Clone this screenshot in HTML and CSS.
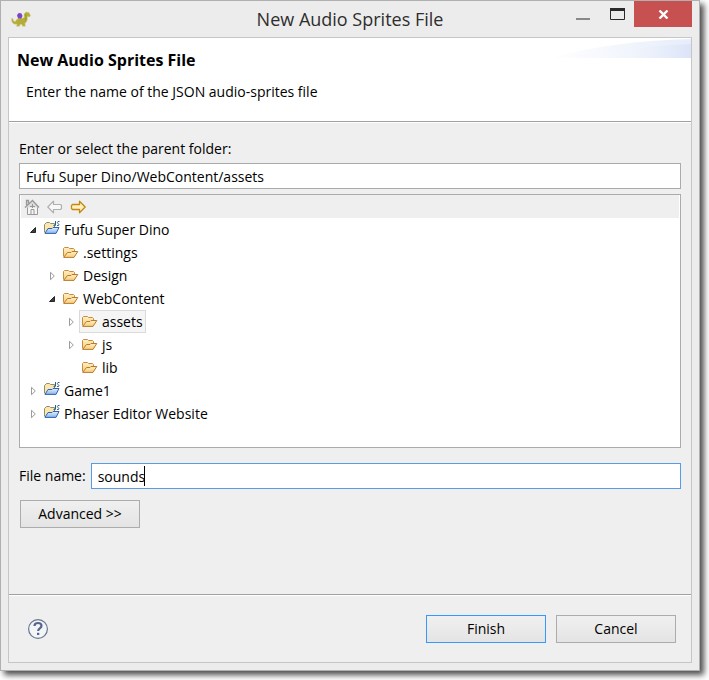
FILE: index.html
```html
<!DOCTYPE html>
<html lang="en">
<head>
<meta charset="utf-8">
<title>New Audio Sprites File</title>
<link rel="stylesheet" href="styles.css">
</head>
<body>
<svg class="defs" aria-hidden="true">
  <defs>
    <linearGradient id="gold" x1="0" y1="0" x2="0" y2="1"><stop offset="0" stop-color="#fff0c4"/><stop offset="1" stop-color="#f7cc78"/></linearGradient>
    <linearGradient id="blue" x1="0" y1="0" x2="0" y2="1"><stop offset="0" stop-color="#e4f0fd"/><stop offset="1" stop-color="#86b4ee"/></linearGradient>
    <symbol id="folder" viewBox="0 0 16 16">
      <path d="M.5 12.500V4.500L1.500 3.500H5.500L6.500 4.500H10.500L11.500 5.500V7" fill="url(#gold)" stroke="#c68d42"/>
      <path d="M.7 13.400L4.500 8.500H8L9 7.500H14.800L11 13.400Z" fill="url(#gold)" stroke="#b87a30" stroke-linejoin="round"/>
    </symbol>
    <symbol id="project" viewBox="0 0 16 16">
      <path d="M.5 12.500V4.500L2.500 2.500H5.500L6.500 3.500H10.500V8" fill="#fbe6b0" stroke="#8e8c69"/>
      <path d="M1 13.400L4 8.500H8L9 7.500H15L12 13.400Z" fill="url(#blue)" stroke="#2f63b5" stroke-linejoin="round"/>
      <path d="M11.500 1V5Q11.500 6.500 9.500 5.500M15.500 1.500H14Q12.800 2.500 14 3.500Q15.800 5 14.500 5.500H13" fill="none" stroke="#2c5f8c"/>
    </symbol>
    <symbol id="closed" viewBox="0 0 8 10"><path d="M2.500 1.300V8.700L6.300 5Z" fill="#fff" stroke="#9b9b9b"/></symbol>
    <symbol id="open" viewBox="0 0 8 10"><path d="M6.500 2.500V7.500H1.500Z" fill="#404040" stroke="#262626"/></symbol>
  </defs>
</svg>
<main class="window">
  <header class="titlebar">
    <svg class="app-icon" viewBox="0 0 20 16" aria-hidden="true">
      <path d="M.6 7.500Q0 13.800 6 13.200L5.500 15.300H8.500L9 13.500H11L11.500 15.300H14.300L14 12.500Q17 10.500 16.300 5.500L18.500 6L19.500 4.500L18 1.600L15.500 1Q12.600 1.400 13.200 6.500Q12 7.500 10 7Q6 7 4.500 10.300Q2.300 11 1.800 7.500Z" fill="#b5ad35" stroke="#d0cc94" stroke-width=".5"/>
      <path d="M13.800 3L15 5.500L14.600 9.500" fill="none" stroke="#8f9a2d"/>
      <path d="M6 4.500L7 2.500L8.500 2L10.500 2.600L11.500 5L10.300 7.500H7.200Z" fill="#7b45c4"/>
    </svg>
    <h1 class="title">New Audio Sprites File</h1>
    <div class="controls">
      <button class="control minimize" aria-label="Minimize"><svg width="14" height="14" viewBox="0 0 14 14"><path d="M0 12H14" stroke="#898989" stroke-width="2"/></svg></button>
      <button class="control maximize" aria-label="Maximize"><svg width="15" height="12" viewBox="0 0 15 12"><path d="M.5 1V11.500H14.500V1" fill="none" stroke="#2a2a2a"/><path d="M0 1.500H15" stroke="#2a2a2a" stroke-width="3"/></svg></button>
      <button class="control close" aria-label="Close"><svg width="11" height="9" viewBox="0 0 11 9"><path d="M1.500 .5L9.500 8.500M9.500 .5L1.500 8.500" stroke="#fff" stroke-width="2.400"/></svg></button>
    </div>
  </header>
  <form class="panel">
    <section class="banner">
      <svg class="banner-art" width="140" height="20" viewBox="0 0 140 20" aria-hidden="true">
        <defs>
          <linearGradient id="fade"><stop offset="0" stop-color="#fff"/><stop offset="1" stop-color="#e6edfa"/></linearGradient>
          <linearGradient id="fade2"><stop offset="0" stop-color="#fff" stop-opacity="0"/><stop offset="1" stop-color="#dbe4f8"/></linearGradient>
        </defs>
        <path d="M0 20Q60 3 140 1V20Z" fill="url(#fade)"/>
        <path d="M40 20Q80 8 140 6V20Z" fill="url(#fade2)"/>
      </svg>
      <h2 class="heading">New Audio Sprites File</h2>
      <p class="description">Enter the name of the JSON audio-sprites file</p>
    </section>
    <section class="content">
      <label class="folder-label" for="folder-path">Enter or select the parent folder:</label>
      <input class="field" id="folder-path" type="text" value="Fufu Super Dino/WebContent/assets">
      <div class="browser">
        <div class="toolbar">
          <button class="tool" type="button" aria-label="Home"><svg width="16" height="16" viewBox="0 0 16 16"><path d="M3.500 7V15.500H13.500V7" fill="#f5f5f5" stroke="#999"/><path d="M1 8.500L8.500 1.500L15 8.500M4.500 5V1.500H2.500V6" fill="#ddd" stroke="#999" stroke-width="1.300"/><path d="M7 15V10.500H10V15M6 7.500H11M8.500 5V9" fill="none" stroke="#999"/></svg></button>
          <button class="tool" type="button" aria-label="Back"><svg width="16" height="16" viewBox="0 0 16 16"><path d="M.8 8L6.500 2.200V5.500H13.500L14.500 6.500V9.500L13.500 10.500H6.500V13.800Z" fill="#f8f8f8" stroke="#b0b0b0" stroke-width="1.200" stroke-linejoin="round"/></svg></button>
          <button class="tool" type="button" aria-label="Forward"><svg width="16" height="16" viewBox="0 0 16 16"><path d="M15.200 8L9.500 2.200V5.500H2.500L1.500 6.500V9.500L2.500 10.500H9.500V13.800Z" fill="#fff1bb" stroke="#c38816" stroke-width="1.300" stroke-linejoin="round"/></svg></button>
        </div>
        <ul class="tree" role="tree" aria-label="Folders">
          <li role="treeitem" aria-expanded="true"><div class="row"><svg class="twisty"><use href="#open"/></svg><span class="item"><svg class="icon project"><use href="#project"/></svg>Fufu Super Dino</span></div>
            <ul role="group">
              <li role="treeitem"><div class="row"><span class="twisty"></span><span class="item"><svg class="icon"><use href="#folder"/></svg>.settings</span></div></li>
              <li role="treeitem"><div class="row"><svg class="twisty"><use href="#closed"/></svg><span class="item"><svg class="icon"><use href="#folder"/></svg>Design</span></div></li>
              <li role="treeitem" aria-expanded="true"><div class="row"><svg class="twisty"><use href="#open"/></svg><span class="item"><svg class="icon"><use href="#folder"/></svg>WebContent</span></div>
                <ul role="group">
                  <li role="treeitem" aria-selected="true"><div class="row"><svg class="twisty"><use href="#closed"/></svg><span class="item selected"><svg class="icon"><use href="#folder"/></svg>assets</span></div></li>
                  <li role="treeitem"><div class="row"><svg class="twisty"><use href="#closed"/></svg><span class="item"><svg class="icon"><use href="#folder"/></svg>js</span></div></li>
                  <li role="treeitem"><div class="row"><span class="twisty"></span><span class="item"><svg class="icon"><use href="#folder"/></svg>lib</span></div></li>
                </ul>
              </li>
            </ul>
          </li>
          <li role="treeitem"><div class="row"><svg class="twisty"><use href="#closed"/></svg><span class="item"><svg class="icon project"><use href="#project"/></svg>Game1</span></div></li>
          <li role="treeitem"><div class="row"><svg class="twisty"><use href="#closed"/></svg><span class="item"><svg class="icon project"><use href="#project"/></svg>Phaser Editor Website</span></div></li>
        </ul>
      </div>
      <div class="file-row">
        <label for="file-name">File name:</label>
        <div class="file-field">
          <input class="field active" id="file-name" type="text" value="sounds">
          <span class="caret"></span>
        </div>
      </div>
      <button class="button advanced" type="button">Advanced &gt;&gt;</button>
    </section>
    <footer class="footer">
      <button class="help" type="button" aria-label="Help"><svg width="22" height="22" viewBox="0 0 22 22"><circle cx="11" cy="11" r="9.400" fill="#f4f5f7" stroke="#687790" stroke-width="1.200"/><path d="M7.500 8Q7.500 5 11 5Q14.500 5 14.500 7.800Q14.500 9.300 12.800 10.400Q11.200 11.400 11.200 13" fill="none" stroke="#56678a" stroke-width="2.200"/><path d="M10 14.800H12.300V17H10Z" fill="#56678a"/></svg></button>
      <button class="button primary" type="submit">Finish</button>
      <button class="button" type="button">Cancel</button>
    </footer>
  </form>
</main>
</body>
</html>
```
FILE: styles.css
```css
* { box-sizing: border-box; }

body {
  margin: 0;
  min-height: 100vh;
  padding: 0 9px 9px 0;
  display: flex;
  background: #fff;
  color: #000;
  font: 14px/20px "Open Sans", "Noto Sans", sans-serif;
}

h1, h2, p, ul { margin: 0; padding: 0; }
ul { list-style: none; }
button, input { font: inherit; color: inherit; }
button { padding: 0; border: 0; background: none; }
svg { display: block; flex: none; }

.defs { position: absolute; width: 0; height: 0; }

.window {
  flex: 1;
  display: flex;
  flex-direction: column;
  padding: 0 7px 7px;
  border: 1px solid #b0b0b0;
  background: #ececec;
  box-shadow: 4px 4px 6px rgba(0, 0, 0, .7);
}

.titlebar {
  height: 36px;
  display: grid;
  grid-template-columns: 1fr auto 1fr;
}

.app-icon { width: 20px; height: 16px; margin: 10px 0 0 3px; }
.title { font-size: 18px; line-height: 36px; font-weight: 400; color: #2e2e2e; }
.controls { display: flex; justify-content: flex-end; align-items: flex-start; }
.control { height: 26px; display: flex; justify-content: center; align-items: center; }
.minimize { width: 34px; }
.maximize { width: 34px; }
.close { width: 58px; background: #c75050; }

.panel {
  flex: 1;
  display: flex;
  flex-direction: column;
  border: 1px solid #c6c6c6;
  background: #efefef;
}

.banner {
  position: relative;
  height: 84px;
  padding: 12px 8px;
  background: #fff;
  border-bottom: 1px solid #a0a0a0;
}

.banner-art { position: absolute; top: 0; right: 0; }
.heading { position: relative; font-size: 16px; line-height: 20px; font-weight: 700; }
.description { position: relative; padding: 12px 9px; }

.content {
  flex: 1;
  display: flex;
  flex-direction: column;
  padding: 16px 10px;
  border-top: 1px solid #fff;
}

.folder-label { margin-bottom: 4px; }

.field {
  width: 100%;
  height: 26px;
  padding: 0 6px;
  border: 1px solid #ababab;
  background: #fff;
  outline: 0;
}

.active { border-color: #569de5; caret-color: transparent; }

.browser {
  min-height: 254px;
  margin: 5px 0 15px;
  padding: 0 1px;
  border: 1px solid #ababab;
  background: #fff;
}

.toolbar { height: 23px; padding: 0 3px; display: flex; align-items: center; gap: 7px; background: #efefef; }
.tree ul { padding-left: 19px; }
.row { height: 23px; padding-left: 8px; display: flex; align-items: center; gap: 4px; }
.twisty { width: 8px; height: 10px; }
.item { height: 23px; padding: 0 2px; border: 1px solid transparent; display: flex; align-items: center; gap: 4px; }
.icon { width: 16px; height: 16px; margin-bottom: 2px; }
.project { margin-bottom: 4px; }
.selected { border-color: #dadada; background: #f5f5f5; }

.file-row { display: flex; align-items: center; gap: 5px; margin-bottom: 11px; }
.file-field { position: relative; flex: 1; display: flex; }
.caret { position: absolute; left: 53px; top: 3px; width: 1px; height: 20px; background: #000; }

.button {
  width: 120px;
  height: 28px;
  border: 1px solid #acacac;
  background: linear-gradient(#f0f0f0, #e4e4e4);
}

.primary { border-color: #3399ff; }
.advanced { margin-left: 1px; }

.footer {
  height: 68px;
  padding: 0 15px 0 18px;
  display: flex;
  align-items: center;
  gap: 10px;
  border-top: 1px solid #a0a0a0;
  box-shadow: inset 0 1px #fff;
}

.help { margin-right: auto; }
```
